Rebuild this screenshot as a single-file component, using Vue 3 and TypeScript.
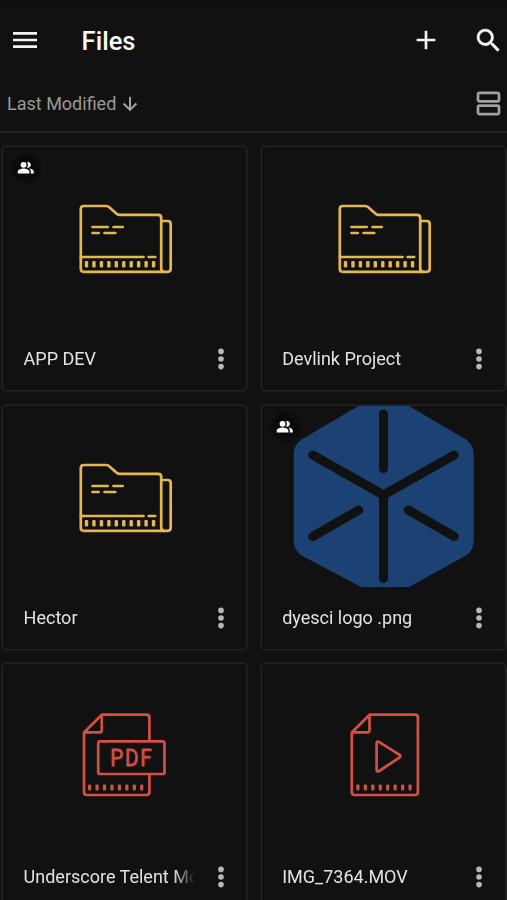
<script setup lang="ts">
type Kind = 'folder' | 'logo' | 'pdf' | 'video'

interface FileItem {
  name: string
  kind: Kind
  shared?: boolean
}

const files: FileItem[] = [
  { name: 'APP DEV', kind: 'folder', shared: true },
  { name: 'Devlink Project', kind: 'folder' },
  { name: 'Hector', kind: 'folder' },
  { name: 'dyesci logo .png', kind: 'logo', shared: true },
  { name: 'Underscore Telent Mo', kind: 'pdf' },
  { name: 'IMG_7364.MOV', kind: 'video' },
]

const ticks = (count: number, start: number, step: number): number[] =>
  Array.from({ length: count }, (_, i) => start + i * step)

const folderTicks = ticks(10, 84, 7.45)
const pdfTicks = ticks(8, 87.1, 7.45)
const videoTicks = ticks(8, 95.9, 7.45)
</script>

<template>
  <main class="screen">
    <header class="bar">
      <button class="icon-btn menu" aria-label="Menu">
        <svg width="32" height="32" viewBox="0 0 24 24"><path d="M3 18h18v-2H3v2zm0-5h18v-2H3v2zm0-7v2h18V6H3z" /></svg>
      </button>
      <h1 class="title">Files</h1>
      <button class="icon-btn add" aria-label="Add">
        <svg width="32" height="32" viewBox="0 0 24 24"><path d="M19 13h-6v6h-2v-6H5v-2h6V5h2v6h6v2z" /></svg>
      </button>
      <button class="icon-btn search" aria-label="Search">
        <svg width="31" height="31" viewBox="0 0 24 24"><path d="M15.5 14h-.79l-.28-.27A6.471 6.471 0 0 0 16 9.5 6.5 6.5 0 1 0 9.5 16c1.61 0 3.09-.59 4.23-1.57l.27.28v.79l5 4.99L20.49 19l-4.99-5zm-6 0C7.01 14 5 11.99 5 9.5S7.01 5 9.5 5 14 7.01 14 9.5 11.99 14 9.5 14z" /></svg>
      </button>
    </header>

    <div class="sort">
      <span class="sort-label">Last Modified</span>
      <svg class="arrow" width="16" height="16" viewBox="0 0 16 16"><path d="M8 1v12.6M1.6 7.5 8 13.9l6.4-6.4" /></svg>
      <svg class="layout" width="25" height="25" viewBox="0 0 25 25">
        <rect x="2" y="1.9" width="21" height="8.4" rx="1.6" />
        <rect x="2" y="14.7" width="21" height="8.4" rx="1.6" />
      </svg>
    </div>

    <section class="grid">
      <article v-for="file in files" :key="file.name" class="card">
        <div class="preview">
          <svg v-if="file.kind === 'folder'" class="art folder" viewBox="0.5 0 243 181">
            <path d="M81.3 124.8Q78.3 124.8 78.3 121.8V62Q78.3 59 81.3 59H103.5Q105.7 59 107 60.4L114.4 66.9Q115.6 67.8 117 67.8H155.6Q158.7 67.8 158.7 70.8V121.4Q158.7 124.8 162 124.8" />
            <path d="M81.3 124.8H165.2Q168.2 124.8 168.2 121.8V77Q168.2 74 165.2 74H158.7" />
            <path d="M78.3 110H141M146.2 110H152.7M90 80H105.2M111 80H120.2M90 86H96.2M102 86H112.8" class="cap" />
            <rect v-for="x in folderTicks" :key="x" :x="x - 1.7" y="114" width="3.4" height="6.4" rx="1.2" class="tick" />
          </svg>

          <svg v-else-if="file.kind === 'logo'" class="art" viewBox="0 0 243 181">
            <path class="hex" d="M96.5 0H147L204 33.5Q211.7 39 211.7 48V135Q211.7 144 204 149.5L147 181H99L39.5 149.5Q31.7 144 31.7 135V48Q31.7 39 39.5 33.5Z" />
            <path class="spokes" d="M121.5 8V62.5M50.7 49 121.5 89 192.3 49M121.5 89V172.5M50.7 130.5 96.8 104M146.3 104 192.3 130.5" />
          </svg>

          <svg v-else-if="file.kind === 'pdf'" class="art doc" viewBox="0.5 0 243 181">
            <path d="M146.9 77V53.7Q146.9 50.7 143.9 50.7H99.3L81.5 68.5V128Q81.5 131 84.5 131H143.9Q146.9 131 146.9 128V110.5" />
            <path d="M99.3 50.7V66.3Q99.3 68.3 97.3 68.3H81.5" />
            <rect x="95.7" y="77.4" width="66.3" height="32.6" rx="2" />
            <text transform="translate(107.8 102) scale(0.88 1)" x="0" y="0" textLength="47" lengthAdjust="spacing">PDF</text>
            <rect v-for="x in pdfTicks" :key="x" :x="x - 1.6" y="120.4" width="3.2" height="6" rx="1" class="tick" />
          </svg>

          <svg v-else class="art doc" viewBox="0 0 243 181">
            <path d="M107.5 50.7H152.9Q155.9 50.7 155.9 53.7V128Q155.9 131 152.9 131H92.8Q89.8 131 89.8 128V68.5Z" />
            <path d="M107.5 50.7V66.3Q107.5 68.3 105.5 68.3H89.8" />
            <path d="M114.6 79.5Q114.6 76.5 117.2 78.1L137.3 90.7Q139.5 92.2 137.3 93.7L117.2 107Q114.6 108.6 114.6 105.5Z" />
            <rect v-for="x in videoTicks" :key="x" :x="x - 1.6" y="120.4" width="3.2" height="6" rx="1" class="tick" />
          </svg>
        </div>

        <div class="caption">
          <span class="name">{{ file.name }}</span>
          <svg class="dots" width="8" height="22" viewBox="0 0 8 22">
            <circle cx="4" cy="3.4" r="2.8" />
            <circle cx="4" cy="11" r="2.8" />
            <circle cx="4" cy="18.6" r="2.8" />
          </svg>
        </div>

        <span v-if="file.shared" class="badge">
          <svg width="17.5" height="17.5" viewBox="0 0 24 24">
            <path d="M16.67 13.13C18.04 14.06 19 15.32 19 17v3h4v-3c0-2.18-3.57-3.47-6.33-3.87z" />
            <circle cx="9" cy="8" r="4" />
            <path d="M15 12c2.21 0 4-1.79 4-4s-1.79-4-4-4c-.47 0-.91.1-1.33.24C14.5 5.27 15 6.58 15 8s-.5 2.73-1.33 3.76c.42.14.86.24 1.33.24zM9 13c-2.67 0-8 1.34-8 4v3h16v-3c0-2.66-5.33-4-8-4z" />
          </svg>
        </span>
      </article>
    </section>
  </main>
</template>

<style>
body {
  margin: 0;
  background: #111;
}
</style>

<style scoped>
.screen {
  box-sizing: border-box;
  width: 507px;
  height: 900px;
  overflow: hidden;
  background: #111;
  border-top: 4px solid #0e0e0e;
  font-family: Roboto, sans-serif;
}
.bar {
  display: flex;
  align-items: center;
  height: 72px;
  padding: 0 3.5px 0 9px;
}
.icon-btn {
  display: flex;
  padding: 0;
  border: 0;
  background: none;
  fill: #f4f4f4;
}
.search {
  stroke: #f4f4f4;
  stroke-width: 0.3;
}
.title {
  flex: 1;
  margin: 0 0 0 40.6px;
  padding-top: 1px;
  font-size: 25.5px;
  font-weight: 500;
  line-height: 32px;
  color: #fafafa;
}
.add {
  margin-right: 30.5px;
}
.sort {
  box-sizing: border-box;
  display: flex;
  align-items: center;
  height: 57px;
  padding: 0 6.5px 0 7px;
  border-bottom: 2px solid #212121;
  color: #999;
}
.sort-label {
  font-size: 18px;
  line-height: 24px;
}
.arrow {
  margin-left: 6px;
  fill: none;
  stroke: #a2a2a2;
  stroke-width: 2;
}
.layout {
  margin-left: auto;
  fill: none;
  stroke: #a0a0a0;
  stroke-width: 2.7;
}
.grid {
  display: grid;
  grid-template-columns: repeat(2, 245px);
  grid-auto-rows: 245px;
  gap: 13.6px;
  padding: 13px 0 0 2px;
}
.card {
  position: relative;
  box-sizing: border-box;
  border: 1px solid #252525;
  border-radius: 4px;
  box-shadow: 0 0 0 1px #191919;
  overflow: hidden;
}
.preview {
  height: 181px;
}
.art {
  display: block;
  width: 243px;
  height: 181px;
}
.folder,
.doc {
  fill: none;
  stroke-width: 2.7;
  stroke-linejoin: round;
}
.folder {
  stroke: #e4b750;
}
.doc {
  stroke: #d35143;
}
.cap {
  stroke-linecap: round;
}
.tick {
  stroke: none;
}
.folder .tick {
  fill: #e4b750;
}
.doc .tick {
  fill: #d35143;
}
.doc text {
  fill: #d35143;
  stroke-width: 0.8;
  font-size: 23.5px;
  font-weight: 400;
}
.hex {
  fill: #1c4274;
}
.spokes {
  fill: none;
  stroke: #111;
  stroke-width: 9;
  stroke-linecap: round;
  stroke-linejoin: round;
}
.caption {
  display: flex;
  align-items: center;
  justify-content: space-between;
  height: 62.7px;
  padding: 0 21.4px 0 20.6px;
}
.name {
  width: 171px;
  overflow: hidden;
  white-space: nowrap;
  font-size: 18px;
  line-height: 26px;
  color: #e2e2e2;
  mask-image: linear-gradient(to right, #000 150px, transparent 171px);
}
.dots {
  fill: #b8b8b8;
}
.badge {
  position: absolute;
  top: 4px;
  left: 6px;
  display: flex;
  align-items: center;
  justify-content: center;
  width: 34px;
  height: 34px;
  border-radius: 50%;
  background: radial-gradient(circle, #0a0a0a 45%, rgba(10, 10, 10, 0) 72%);
  fill: #fff;
}
</style>
